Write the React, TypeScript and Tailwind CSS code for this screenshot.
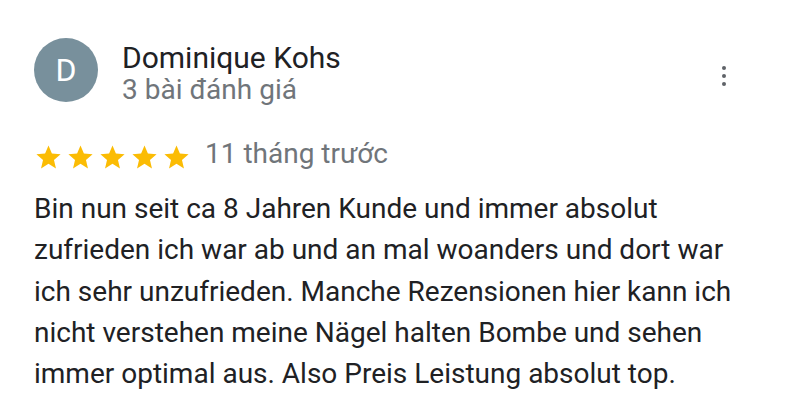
import React from "react";

const Star = () => (
  <svg width="29" height="29" viewBox="0 0 24 24" className="block shrink-0">
    <path fill="#fbbc04" d="M12 17.27L18.18 21l-1.64-7.03L22 9.24l-7.19-.61L12 2 9.19 8.63 2 9.24l5.46 4.73L5.82 21z" />
  </svg>
);

export default function App() {
  return (
    <div className="w-[792px] h-[420px] bg-white overflow-hidden" style={{ fontFamily: "Roboto, 'Noto Sans', sans-serif" }}>
      <div className="pl-[34px] pt-[38px]">
        <div className="flex items-start">
          <div className="w-[64px] h-[64px] rounded-full bg-[#78909c] flex items-center justify-center text-white text-[32px] leading-none">D</div>
          <div className="ml-[24px] mt-[3px] flex-1">
            <div className="text-[30px] leading-[33px] text-[#202124]">Dominique Kohs</div>
            <div className="text-[28px] leading-[32px] text-[#70757a]">3 bài đánh giá</div>
          </div>
          <div className="mt-[28px] mr-[66px] flex flex-col gap-[4px] items-center">
            <div className="w-[4px] h-[4px] rounded-full bg-[#5f6368]" />
            <div className="w-[4px] h-[4px] rounded-full bg-[#5f6368]" />
            <div className="w-[4px] h-[4px] rounded-full bg-[#5f6368]" />
          </div>
        </div>
        <div className="flex items-start mt-[32px]">
          <div className="flex gap-[3px] mt-[5px]"><Star /><Star /><Star /><Star /><Star /></div>
          <div className="ml-[14px] text-[28px] leading-[32px] text-[#70757a]">11 tháng trước</div>
        </div>
        <div className="mt-[16px] text-[28px] leading-[41.25px] text-[#202124] w-[715px]">
          Bin nun seit ca 8 Jahren Kunde und immer absolut zufrieden ich war ab und an mal woanders und dort war ich sehr unzufrieden. Manche Rezensionen hier kann ich nicht verstehen meine Nägel halten Bombe und sehen immer optimal aus. Also Preis Leistung absolut top.
        </div>
      </div>
    </div>
  );
}
